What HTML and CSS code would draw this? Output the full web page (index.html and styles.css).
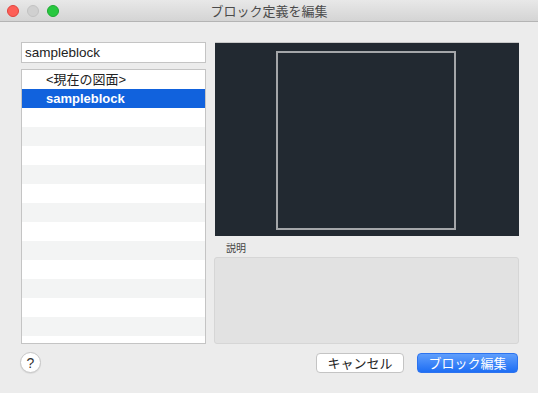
FILE: index.html
```html
<!DOCTYPE html>
<html lang="ja">
<head>
    <meta charset="UTF-8">
    <meta name="viewport" content="width=device-width, initial-scale=1.0">
    <title>ブロック定義を編集</title>
    <link rel="stylesheet" href="styles.css">
</head>
<body>

<div class="window">
    <div class="titlebar">
        <div class="lights">
            <span class="light red"></span>
            <span class="light gray"></span>
            <span class="light green"></span>
        </div>
        <div class="title">ブロック定義を編集</div>
    </div>

    <div class="content">
        <div class="left">
            <input type="text" class="search" value="sampleblock">
            <div class="list">
                <div class="row">&lt;現在の図面&gt;</div>
                <div class="row selected">sampleblock</div>
                <div class="row"></div>
                <div class="row"></div>
                <div class="row"></div>
                <div class="row"></div>
                <div class="row"></div>
                <div class="row"></div>
                <div class="row"></div>
                <div class="row"></div>
                <div class="row"></div>
                <div class="row"></div>
                <div class="row"></div>
                <div class="row"></div>
                <div class="row"></div>
            </div>
        </div>

        <div class="right">
            <div class="preview">
                <div class="block-shape"></div>
            </div>
            <div class="desc-label">説明</div>
            <div class="desc-box"></div>
        </div>
    </div>

    <div class="footer">
        <button class="help">?</button>
        <div class="actions">
            <button class="btn">キャンセル</button>
            <button class="btn primary">ブロック編集</button>
        </div>
    </div>
</div>

</body>
</html>
```

FILE: styles.css
```css
body {
    margin: 0;
    padding: 0;
    font-family: "Liberation Sans", "Noto Sans CJK JP", sans-serif;
    background-color: #ececec;
}

.window {
    width: 538px;
    height: 393px;
    background-color: #ececec;
    overflow: hidden;
}

.titlebar {
    height: 21px;
    border-bottom: 1px solid #b4b4b4;
    background: linear-gradient(#e8e8e8, #d4d4d4);
    display: flex;
    align-items: center;
    position: relative;
}

.lights {
    display: flex;
    gap: 8px;
    padding-left: 7px;
}

.light {
    width: 12px;
    height: 12px;
    border-radius: 50%;
    box-sizing: border-box;
}

.light.red {
    background-color: #fd5f57;
    border: 1px solid #e0443e;
}

.light.gray {
    background-color: #d0d0d0;
    border: 1px solid #c2c2c2;
}

.light.green {
    background-color: #28c840;
    border: 1px solid #1ea932;
}

.title {
    position: absolute;
    left: 0;
    right: 0;
    text-align: center;
    font-size: 13px;
    color: #4b4b4b;
    pointer-events: none;
}

.content {
    display: flex;
    gap: 8px;
    padding: 20px 20px 0 21px;
}

.left {
    width: 185px;
    display: flex;
    flex-direction: column;
    gap: 6px;
}

.search {
    box-sizing: border-box;
    width: 185px;
    height: 21px;
    margin: 0;
    padding: 0 3px;
    border: 1px solid #c4c4c4;
    background-color: white;
    font-family: "Liberation Sans", "Noto Sans CJK JP", sans-serif;
    font-size: 13.5px;
    color: #222;
    outline: none;
}

.list {
    box-sizing: border-box;
    height: 275px;
    border: 1px solid #c4c4c4;
    background-color: white;
    overflow: hidden;
}

.row {
    height: 19px;
    line-height: 19px;
    padding-left: 24px;
    font-size: 13px;
    color: #222;
}

.row:nth-child(even) {
    background-color: #f3f4f4;
}

.row.selected {
    background-color: #1162dd;
    color: white;
    font-weight: bold;
}

.right {
    width: 305px;
    display: flex;
    flex-direction: column;
}

.preview {
    box-sizing: border-box;
    margin-left: 1px;
    width: 304px;
    height: 194px;
    background-color: #222931;
    border-top: 1px solid #c8c8c8;
    display: flex;
    justify-content: center;
    padding-top: 8px;
}

.block-shape {
    box-sizing: border-box;
    width: 180px;
    height: 179px;
    margin-left: -2px;
    border: 2px solid #a4a6a9;
}

.desc-label {
    font-size: 10px;
    color: #444;
    padding: 6px 0 0 12px;
    height: 13px;
    line-height: 13px;
}

.desc-box {
    box-sizing: border-box;
    margin-top: 2px;
    height: 87px;
    background-color: #e2e2e2;
    border: 1px solid #d6d6d6;
    border-radius: 3px;
}

.footer {
    display: flex;
    justify-content: space-between;
    align-items: center;
    padding: 8px 20px 0 20px;
}

.help {
    box-sizing: border-box;
    width: 21px;
    height: 21px;
    padding: 0;
    border-radius: 50%;
    border: 1px solid #c6c6c6;
    background-color: white;
    font-family: "Liberation Sans", sans-serif;
    font-size: 14px;
    color: #333;
    box-shadow: 0 1px 1px rgba(0, 0, 0, 0.08);
}

.actions {
    display: flex;
    gap: 13px;
    margin-top: 1px;
}

.btn {
    box-sizing: border-box;
    height: 20px;
    padding: 0;
    border: 1px solid #c4c4c4;
    border-radius: 4px;
    background-color: white;
    font-family: "Noto Sans CJK JP", sans-serif;
    font-size: 13px;
    color: #222;
    width: 88px;
    line-height: 18px;
}

.btn.primary {
    width: 101px;
    border: 1px solid #2c73ef;
    background: linear-gradient(#5f9efc, #1e6ef4);
    color: white;
}
```
